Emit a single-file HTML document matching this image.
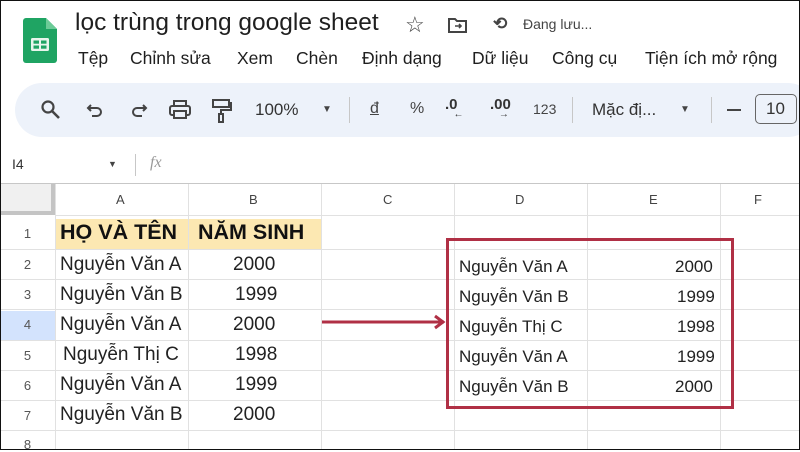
<!DOCTYPE html>
<html><head><meta charset="utf-8"><style>
*{margin:0;padding:0;box-sizing:border-box}
body{width:800px;height:450px;overflow:hidden;background:#fff;font-family:"Liberation Sans",Arial,sans-serif;color:#202124;position:relative}
.a{position:absolute;white-space:nowrap}
.m{position:absolute;white-space:nowrap;top:48px;font-size:17.5px;color:#1f1f1f}
.vl{position:absolute;width:1px;background:#e1e1e1}
.hl{position:absolute;height:1px;background:#e1e1e1}
.rn{position:absolute;left:0;width:55px;text-align:center;font-size:13px;color:#555}
.c{position:absolute;font-size:19px;color:#222}
.d{position:absolute;font-size:17px;color:#222}
</style></head><body>
<div style="position:absolute;inset:0;border:1.5px solid #111;z-index:9;pointer-events:none"></div>
<svg class="a" style="left:23px;top:18px" width="34" height="45" viewBox="0 0 34 45">
<path d="M3 0H23L34 11V42a3 3 0 0 1-3 3H3a3 3 0 0 1-3-3V3a3 3 0 0 1 3-3z" fill="#1fa463"/>
<path d="M23 0V11H34z" fill="#6ccb97"/>
<rect x="8" y="20" width="18" height="13" rx="1.5" fill="#e8f5ec"/>
<rect x="10.5" y="22.5" width="5.5" height="3.2" fill="#1fa463"/><rect x="18" y="22.5" width="5.5" height="3.2" fill="#1fa463"/>
<rect x="10.5" y="27.5" width="5.5" height="3.2" fill="#1fa463"/><rect x="18" y="27.5" width="5.5" height="3.2" fill="#1fa463"/>
</svg>
<div class="a" style="left:75px;top:9px;font-size:24.5px;color:#1f1f1f">lọc trùng trong google sheet</div>
<div class="a" style="left:405px;top:12px;font-size:22px;color:#444">☆</div>
<svg class="a" style="left:447px;top:16px" width="22" height="18" viewBox="0 0 22 18"><path d="M2 3h6l2 2h9v11H2z" fill="none" stroke="#444" stroke-width="2"/><path d="M8 10h6M12 8l2 2-2 2" stroke="#444" stroke-width="1.6" fill="none"/></svg>
<div class="a" style="left:493px;top:14px;font-size:17px;color:#444;font-weight:bold">⟲</div>
<div class="a" style="left:523px;top:16px;font-size:14px;color:#444">Đang lưu...</div>
<div class="m" style="left:78px">Tệp</div>
<div class="m" style="left:130px">Chỉnh sửa</div>
<div class="m" style="left:237px">Xem</div>
<div class="m" style="left:296px">Chèn</div>
<div class="m" style="left:362px">Định dạng</div>
<div class="m" style="left:472px">Dữ liệu</div>
<div class="m" style="left:552px">Công cụ</div>
<div class="m" style="left:645px">Tiện ích mở rộng</div>
<div class="a" style="left:15px;top:83px;width:800px;height:54px;background:#edf2fa;border-radius:27px"></div>
<svg class="a" style="left:40px;top:99px" width="22" height="22" viewBox="0 0 22 22"><circle cx="8" cy="8" r="5.5" fill="none" stroke="#444" stroke-width="2.2"/><path d="M12 12l7 7" stroke="#444" stroke-width="2.6"/></svg>
<svg class="a" style="left:86px;top:101px" width="20" height="20" viewBox="0 0 20 20"><path d="M5 4L2 7l3 3M2 7h9a4 4 0 0 1 0 8H6" fill="none" stroke="#444" stroke-width="2"/></svg>
<svg class="a" style="left:128px;top:101px" width="20" height="20" viewBox="0 0 20 20"><path d="M15 4l3 3-3 3M18 7H9a4 4 0 0 0 0 8h5" fill="none" stroke="#444" stroke-width="2"/></svg>
<svg class="a" style="left:168px;top:99px" width="24" height="22" viewBox="0 0 24 22"><rect x="6" y="2" width="12" height="5" fill="none" stroke="#444" stroke-width="2"/><rect x="2" y="7" width="20" height="9" rx="2" fill="none" stroke="#444" stroke-width="2"/><rect x="6" y="12" width="12" height="7" fill="#edf2fa" stroke="#444" stroke-width="2"/></svg>
<svg class="a" style="left:211px;top:98px" width="22" height="26" viewBox="0 0 22 26"><rect x="2" y="2" width="16" height="7" fill="none" stroke="#444" stroke-width="2"/><path d="M18 5h2v7H10v4" fill="none" stroke="#444" stroke-width="2"/><rect x="8" y="16" width="4" height="8" fill="none" stroke="#444" stroke-width="2"/></svg>
<div class="a" style="left:255px;top:100px;font-size:17px;color:#333">100%</div>
<div class="a" style="left:322px;top:104px;font-size:10px;color:#444">▼</div>
<div class="a" style="left:349px;top:97px;width:1px;height:26px;background:#c7c7c7"></div>
<div class="a" style="left:370px;top:100px;font-size:16px;color:#444;text-decoration:underline">đ</div>
<div class="a" style="left:410px;top:100px;font-size:16px;color:#444">%</div>
<div class="a" style="left:445px;top:96px;font-size:15px;color:#333;font-weight:bold">.0<span style="font-size:10px;position:relative;top:8px;left:-4px">←</span></div>
<div class="a" style="left:490px;top:96px;font-size:15px;color:#333;font-weight:bold">.00<span style="font-size:10px;position:relative;top:8px;left:-12px">→</span></div>
<div class="a" style="left:533px;top:101px;font-size:14px;color:#444">123</div>
<div class="a" style="left:572px;top:97px;width:1px;height:26px;background:#c7c7c7"></div>
<div class="a" style="left:592px;top:100px;font-size:17px;color:#333">Mặc đị...</div>
<div class="a" style="left:680px;top:104px;font-size:10px;color:#444">▼</div>
<div class="a" style="left:711px;top:97px;width:1px;height:26px;background:#c7c7c7"></div>
<div class="a" style="left:727px;top:109px;width:14px;height:2px;background:#444"></div>
<div class="a" style="left:755px;top:94px;width:42px;height:30px;border:1.5px solid #666;border-radius:5px;font-size:17px;padding:4px 0 0 10px;color:#333">10</div>
<div class="a" style="left:12px;top:156px;font-size:14px;color:#333">I4</div>
<div class="a" style="left:108px;top:159px;font-size:9px;color:#444">▼</div>
<div class="a" style="left:135px;top:154px;width:1px;height:22px;background:#c7c7c7"></div>
<div class="a" style="left:150px;top:154px;font-size:16px;color:#999;font-style:italic;font-family:'Liberation Serif',serif">fx</div>
<div class="hl" style="left:0;top:183px;width:800px;background:#c7c7c7"></div>
<div class="a" style="left:0;top:184px;width:55px;height:31px;background:#f0f0f0;border-right:4px solid #c4c4c4;border-bottom:4px solid #c4c4c4"></div>
<div class="a" style="left:0;top:311px;width:55px;height:29px;background:#d3e3fd"></div>
<div class="hl" style="left:55px;top:215px;width:745px"></div>
<div class="a" style="left:55px;top:219px;width:266px;height:30px;background:#fce8b2"></div>
<div class="vl" style="left:55px;top:184px;height:266px"></div>
<div class="vl" style="left:188px;top:184px;height:266px"></div>
<div class="vl" style="left:321px;top:184px;height:266px"></div>
<div class="vl" style="left:454px;top:184px;height:266px"></div>
<div class="vl" style="left:587px;top:184px;height:266px"></div>
<div class="vl" style="left:720px;top:184px;height:266px"></div>
<div class="hl" style="left:0;top:249px;width:800px"></div>
<div class="hl" style="left:0;top:279px;width:800px"></div>
<div class="hl" style="left:0;top:309px;width:800px"></div>
<div class="hl" style="left:0;top:340px;width:800px"></div>
<div class="hl" style="left:0;top:370px;width:800px"></div>
<div class="hl" style="left:0;top:400px;width:800px"></div>
<div class="hl" style="left:0;top:430px;width:800px"></div>
<div class="a" style="left:116px;top:192px;font-size:13px;color:#444">A</div>
<div class="a" style="left:249px;top:192px;font-size:13px;color:#444">B</div>
<div class="a" style="left:383px;top:192px;font-size:13px;color:#444">C</div>
<div class="a" style="left:515px;top:192px;font-size:13px;color:#444">D</div>
<div class="a" style="left:649px;top:192px;font-size:13px;color:#444">E</div>
<div class="a" style="left:754px;top:192px;font-size:13px;color:#444">F</div>
<div class="rn" style="top:226px">1</div><div class="rn" style="top:257px">2</div><div class="rn" style="top:287px">3</div><div class="rn" style="top:317px">4</div><div class="rn" style="top:348px">5</div><div class="rn" style="top:378px">6</div><div class="rn" style="top:408px">7</div><div class="rn" style="top:437px">8</div>
<div class="c" style="left:60px;top:220px;font-weight:bold;font-size:21.5px;color:#111">HỌ VÀ TÊN</div>
<div class="c" style="left:198px;top:220px;font-weight:bold;font-size:21.5px;color:#111">NĂM SINH</div>
<div class="c" style="left:60px;top:254px">Nguyễn Văn A</div><div class="c" style="left:233px;top:254px">2000</div>
<div class="c" style="left:60px;top:284px">Nguyễn Văn B</div><div class="c" style="left:235px;top:284px">1999</div>
<div class="c" style="left:60px;top:314px">Nguyễn Văn A</div><div class="c" style="left:233px;top:314px">2000</div>
<div class="c" style="left:63px;top:344px">Nguyễn Thị C</div><div class="c" style="left:235px;top:344px">1998</div>
<div class="c" style="left:60px;top:374px">Nguyễn Văn A</div><div class="c" style="left:235px;top:374px">1999</div>
<div class="c" style="left:60px;top:404px">Nguyễn Văn B</div><div class="c" style="left:233px;top:404px">2000</div>
<div class="d" style="left:459px;top:257px">Nguyễn Văn A</div><div class="d" style="left:675px;top:257px">2000</div>
<div class="d" style="left:459px;top:287px">Nguyễn Văn B</div><div class="d" style="left:677px;top:287px">1999</div>
<div class="d" style="left:459px;top:317px">Nguyễn Thị C</div><div class="d" style="left:677px;top:317px">1998</div>
<div class="d" style="left:459px;top:347px">Nguyễn Văn A</div><div class="d" style="left:677px;top:347px">1999</div>
<div class="d" style="left:459px;top:377px">Nguyễn Văn B</div><div class="d" style="left:675px;top:377px">2000</div>
<div class="a" style="left:446px;top:238px;width:288px;height:171px;border:3px solid #b03045"></div>
<svg class="a" style="left:320px;top:314px" width="128" height="16" viewBox="0 0 128 16"><path d="M2 8H124M115 2l8 6-8 6" fill="none" stroke="#b03045" stroke-width="3"/></svg>
</body></html>
